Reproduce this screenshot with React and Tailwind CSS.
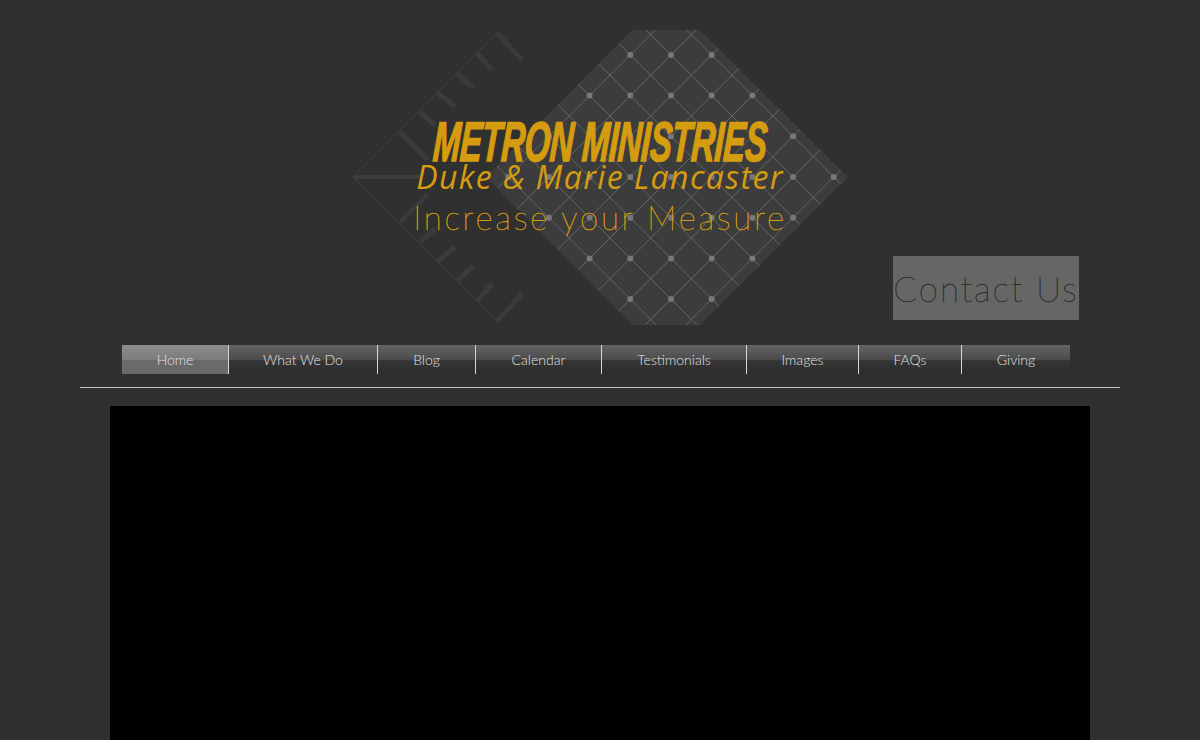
const navItems = [
  { label: "Home", width: "w-[107px]", active: true },
  { label: "What We Do", width: "w-[149px]" },
  { label: "Blog", width: "w-[98px]" },
  { label: "Calendar", width: "w-[126px]" },
  { label: "Testimonials", width: "w-[145px]" },
  { label: "Images", width: "w-[112px]" },
  { label: "FAQs", width: "w-[103px]" },
  { label: "Giving", width: "w-[108px]", last: true },
];

const STEP = 40.7;
const CX = 671;
const CY = 177;

const offsets = Array.from({ length: 21 }, (_, i) => (i - 10) * STEP);

const dots = [-3, -2, -1, 0, 1, 2, 3].flatMap((row) => {
  const reach = 4 - Math.abs(row);
  return Array.from({ length: reach * 2 + 1 }, (_, i) => ({
    x: CX + (i - reach) * STEP,
    y: CY + row * STEP,
  }));
});

const ticks = [
  [497, 33, 522, 60],
  [477, 53, 492, 70],
  [457, 73, 473, 88],
  [438, 93, 455, 107],
  [420, 112, 435, 125],
  [400, 132, 428, 160],
];

function Logo() {
  return (
    <svg
      className="absolute left-[350px] top-[28px] h-[300px] w-[500px]"
      viewBox="350 28 500 300"
    >
      <defs>
        <clipPath id="plate">
          <polygon points="632,30 700,30 848,177 700,325 632,325 486,177" />
        </clipPath>
      </defs>
      <polyline
        points="497,33 353,177 497,321"
        fill="none"
        stroke="#404040"
        strokeWidth="1"
      />
      {ticks.map(([x1, y1, x2, y2]) => (
        <g key={x1} stroke="#3b3b3b" strokeWidth="5">
          <line x1={x1} y1={y1} x2={x2} y2={y2} />
          <line x1={x1} y1={354 - y1} x2={x2} y2={354 - y2} />
        </g>
      ))}
      <line x1="354" y1="177" x2="420" y2="177" stroke="#3d3d3d" strokeWidth="4" />
      <polygon points="632,30 700,30 848,177 700,325 632,325 486,177" fill="#3c3c3c" />
      <g clipPath="url(#plate)" stroke="#727272" strokeWidth="0.8">
        {offsets.map((d) => (
          <g key={d}>
            <line x1={CX + d - 300} y1={CY - 300} x2={CX + d + 300} y2={CY + 300} />
            <line x1={CX + d - 300} y1={CY + 300} x2={CX + d + 300} y2={CY - 300} />
          </g>
        ))}
      </g>
      {dots.map((dot) => (
        <circle key={`${dot.x}-${dot.y}`} cx={dot.x} cy={dot.y} r="3" fill="#787878" />
      ))}
    </svg>
  );
}

function NavItem({ label, width, active, last }) {
  return (
    <a
      className={`relative flex h-full items-center justify-center ${width} ${
        last ? "" : "border-r border-[#d6d6d6]"
      } ${
        active
          ? "bg-[linear-gradient(#8c8c8c_0%,#7c7c7c_50%,#6a6a6a_52%,#696969_100%)]"
          : "bg-[linear-gradient(#636363_0%,#4c4c4c_50%,#353535_54%,#2d2d2d_100%)]"
      }`}
    >
      <span className="font-['Lato',sans-serif] text-[14px] font-light leading-none text-[#e4e4e4]">
        {label}
      </span>
    </a>
  );
}

export default function App() {
  return (
    <div className="h-[740px] overflow-hidden bg-[#303030]">
      <header className="relative flex h-[345px] items-end justify-end pb-[25px] pr-[121px]">
        <Logo />
        <div className="absolute left-0 right-0 top-[121px] flex justify-center">
          <h1 className="origin-center -skew-x-[6deg] scale-x-[0.585] whitespace-nowrap font-['Liberation_Sans',sans-serif] text-[56px] font-bold italic leading-[42px] tracking-[-0.5px] text-[#d69c0f] [-webkit-text-stroke:1.5px_#d69c0f]">
            METRON MINISTRIES
          </h1>
        </div>
        <div className="absolute left-0 right-0 top-[156px] flex justify-center">
          <p className="whitespace-nowrap font-['Open_Sans',sans-serif] text-[32px] italic leading-[42px] tracking-[1.4px] text-[#d69c0f]">
            Duke &amp; Marie Lancaster
          </p>
        </div>
        <div className="absolute left-0 right-0 top-[195px] flex justify-center">
          <p className="whitespace-nowrap font-['Lato',sans-serif] text-[33px] font-thin leading-[44px] tracking-[2.75px] text-[#d69c0f] [-webkit-text-stroke:0.5px_#d69c0f]">
            Increase your Measure
          </p>
        </div>
        <a className="relative flex h-[64px] w-[186px] items-center justify-center bg-[#666666]">
          <span className="whitespace-nowrap font-['Lato',sans-serif] text-[35px] font-thin leading-none tracking-[1.9px] text-[#2c2c2c] [-webkit-text-stroke:0.4px_#2c2c2c]">
            Contact Us
          </span>
        </a>
      </header>

      <nav className="ml-[122px] flex h-[29px] w-[948px]">
        {navItems.map((item) => (
          <NavItem key={item.label} {...item} />
        ))}
      </nav>

      <div className="mx-[80px] mt-[13px] h-px bg-[#c8c8c8]" />

      <main className="mx-[110px] mt-[18px] h-[334px] bg-black" />
    </div>
  );
}
